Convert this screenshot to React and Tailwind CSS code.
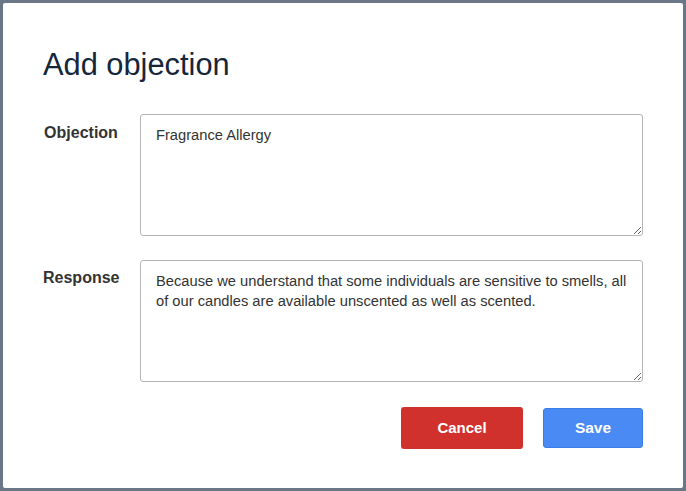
import { useState } from 'react';

function Field({ label, value, labelPad }) {
  return (
    <div className="flex gap-[21px]">
      <label className={`w-[76px] shrink-0 text-center text-[16px] leading-[20px] font-bold text-[#333333] ${labelPad}`}>
        {label}
      </label>
      <textarea
        defaultValue={value}
        className="h-[122px] flex-1 rounded-[3px] border border-[#b5b5b5] bg-white px-[15px] pt-[10px] text-[14.7px] leading-[20px] text-[#333333] outline-none"
      />
    </div>
  );
}

export default function App() {
  const [objection] = useState('Fragrance Allergy');
  const [response] = useState(
    'Because we understand that some individuals are sensitive to smells, all of our candles are available unscented as well as scented.'
  );

  return (
    <div className="min-h-screen bg-[#6b7686] p-[3px] font-['Liberation_Sans',Arial,sans-serif]">
      <div className="h-[485px] w-[680px] rounded-[2px] bg-white px-10 pt-[45px]">
        <h2 className="text-[30.8px] leading-[33px] font-normal text-[#16263a]">Add objection</h2>

        <div className="mt-[33px] flex flex-col gap-[24px]">
          <Field label="Objection" value={objection} labelPad="pt-[9px]" />
          <Field label="Response" value={response} labelPad="pt-[8px]" />
        </div>

        <div className="mt-[25px] flex items-center justify-end gap-[20px]">
          <button className="h-[42px] w-[122px] rounded-[3px] bg-[#d0312d] text-[15px] font-bold text-white">
            Cancel
          </button>
          <button className="h-[40px] w-[100px] rounded-[3px] border border-[#3b7de8] bg-[#4a8af4] text-[15.5px] font-bold text-white">
            Save
          </button>
        </div>
      </div>
    </div>
  );
}
